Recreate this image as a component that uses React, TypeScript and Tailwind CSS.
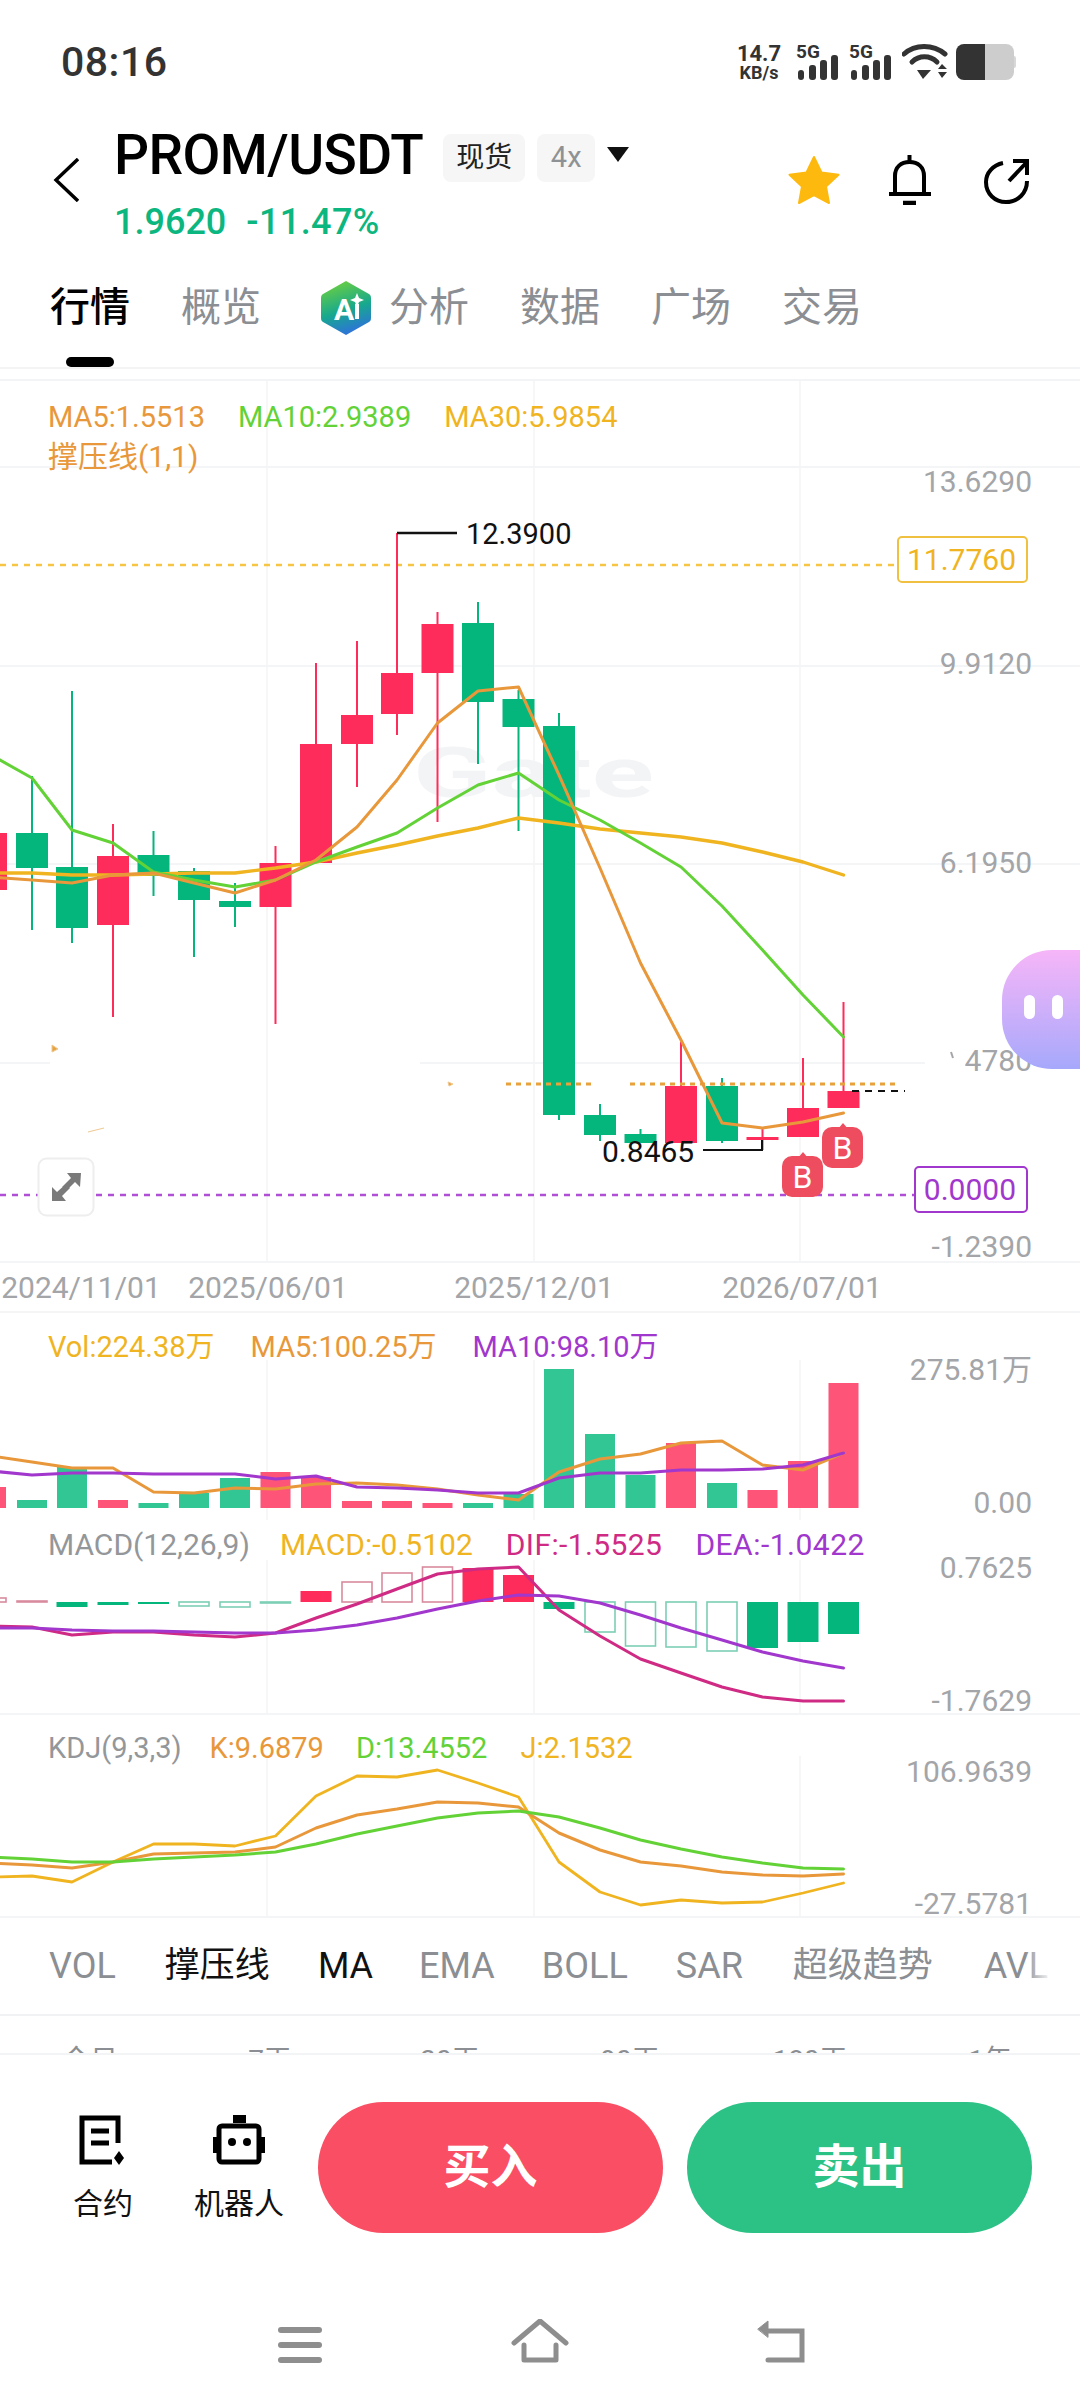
import React from "react";

const XS = [-9, 32, 72, 113, 153.5, 194, 235, 275.5, 316, 357, 397, 437.5, 478, 518.5, 559, 600, 640.5, 681, 722, 762.5, 803, 843.5];
const RED = "#fd2c5b";
const GREEN = "#04b67c";
const GOLD = "#efb41f";
const ORANGE = "#e8983a";
const LIME = "#63d237";
const PURPLE = "#a137cc";
const PINK = "#cf2a84";
const AXIS = "#a3a5a8";
const GRID = "#f4f5f6";

const pts = (ys: number[]) => ys.map((y, i) => `${XS[i]},${y}`).join(" ");

function Line({ ys, color, w = 2.6 }: { ys: number[]; color: string; w?: number }) {
  return <polyline points={pts(ys)} fill="none" stroke={color} strokeWidth={w} strokeLinejoin="round" strokeLinecap="round" />;
}

function Axis({ y, children, color = AXIS }: { y: number; children: React.ReactNode; color?: string }) {
  return (
    <text x={1032} y={y + 10} textAnchor="end" fontSize={30} fill={color}>
      {children}
    </text>
  );
}

function VGrid({ y1, y2 }: { y1: number; y2: number }) {
  return (
    <>
      {[267, 534, 800].map((x) => (
        <line key={x} x1={x} x2={x} y1={y1} y2={y2} stroke={GRID} strokeWidth={1.5} />
      ))}
    </>
  );
}

// color, bodyTop, bodyBottom, wickTop, wickBottom
const CANDLES: [string, number, number, number, number][] = [
  [RED, 833, 890, 833, 890],
  [GREEN, 833, 868, 776, 930],
  [GREEN, 867, 928, 691, 943],
  [RED, 856, 925, 824, 1017],
  [GREEN, 855, 876, 831, 896],
  [GREEN, 871, 900, 868, 957],
  [GREEN, 901, 907, 883, 927],
  [RED, 863, 907, 846, 1024],
  [RED, 744, 863, 663, 863],
  [RED, 715, 744, 641, 787],
  [RED, 673, 714, 533, 735],
  [RED, 624, 673, 612, 822],
  [GREEN, 623, 702, 602, 764],
  [GREEN, 699, 727, 690, 831],
  [GREEN, 726, 1115, 713, 1120],
  [GREEN, 1115, 1135, 1104, 1141],
  [GREEN, 1134, 1143, 1129, 1143],
  [RED, 1086, 1143, 1042, 1143],
  [GREEN, 1086, 1141, 1078, 1143],
  [RED, 1137, 1140, 1128, 1150],
  [RED, 1108, 1137, 1058, 1137],
  [RED, 1091, 1108, 1002, 1108],
];

const MA5 = [877, 880, 883, 875, 873, 883, 893, 880, 860, 827, 780, 723, 691, 687, 775, 868, 963, 1040, 1123, 1128, 1122, 1113];
const MA10 = [755, 778, 830, 843, 872, 880, 887, 880, 862, 847, 833, 808, 785, 773, 800, 820, 843, 867, 906, 950, 995, 1037];
const MA30 = [873, 873, 875, 875, 874, 873, 873, 868, 862, 853, 845, 836, 828, 818, 823, 829, 833, 837, 843, 852, 862, 875];

const VOL: [string, number][] = [
  ["r", 1487], ["g", 1500], ["g", 1467], ["r", 1500], ["g", 1503], ["g", 1493], ["g", 1478], ["r", 1472], ["r", 1477], ["r", 1501], ["r", 1501],
  ["r", 1503], ["g", 1503], ["g", 1494], ["g", 1369], ["g", 1434], ["g", 1475], ["r", 1443], ["g", 1483], ["r", 1490], ["r", 1461], ["r", 1383],
];
const VMA5 = [1456, 1462, 1468, 1468, 1492, 1493, 1488, 1489, 1484, 1483, 1485, 1489, 1495, 1500, 1472, 1459, 1454, 1443, 1441, 1465, 1470, 1453];
const VMA10 = [1471, 1475, 1473, 1473, 1474, 1474, 1474, 1479, 1476, 1487, 1488, 1490, 1493, 1493, 1478, 1473, 1473, 1470, 1470, 1469, 1465, 1453];

// color, filled, end-y relative to the zero line at 1602
const MACD: [string, boolean, number][] = [
  [RED, false, 1598], [RED, false, 1601], [GREEN, true, 1607], [GREEN, true, 1605], [GREEN, true, 1604], [GREEN, false, 1606], [GREEN, false, 1607],
  [GREEN, false, 1603], [RED, true, 1591], [RED, false, 1582], [RED, false, 1573], [RED, false, 1567], [RED, true, 1568], [RED, true, 1575],
  [GREEN, true, 1609], [GREEN, false, 1632], [GREEN, false, 1646], [GREEN, false, 1647], [GREEN, false, 1651], [GREEN, true, 1648], [GREEN, true, 1642], [GREEN, true, 1634],
];
const DIF = [1626, 1627, 1635, 1632, 1632, 1635, 1637, 1633, 1618, 1604, 1589, 1574, 1569, 1567, 1610, 1636, 1659, 1673, 1687, 1697, 1701, 1701];
const DEA = [1628, 1628, 1630, 1631, 1631, 1632, 1633, 1633, 1630, 1625, 1618, 1609, 1601, 1595, 1596, 1603, 1615, 1628, 1640, 1652, 1661, 1668];

const K = [1863, 1865, 1868, 1862, 1854, 1853, 1852, 1847, 1828, 1815, 1809, 1802, 1803, 1807, 1833, 1850, 1862, 1866, 1872, 1875, 1876, 1874];
const D = [1857, 1859, 1862, 1862, 1859, 1857, 1855, 1852, 1844, 1834, 1826, 1818, 1813, 1811, 1817, 1828, 1840, 1849, 1857, 1863, 1868, 1869];
const J = [1877, 1876, 1882, 1862, 1844, 1844, 1846, 1836, 1796, 1776, 1777, 1770, 1783, 1797, 1862, 1892, 1905, 1900, 1903, 1902, 1893, 1883];

function Panel({ top, h, children, legend }: { top: number; h: number; children: React.ReactNode; legend: React.ReactNode }) {
  return (
    <div className="relative w-full" style={{ height: h }}>
      <svg className="absolute inset-0 overflow-visible" width={1080} height={h} viewBox={`0 ${top} 1080 ${h}`}>
        {children}
      </svg>
      {legend}
    </div>
  );
}

function Signal({ x }: { x: number }) {
  return (
    <g fill="#333">
      <rect x={x} y={70} width={6} height={10} rx={3} />
      <rect x={x + 11} y={65} width={7} height={15} rx={3} />
      <rect x={x + 22} y={60} width={7} height={20} rx={3} />
      <rect x={x + 33} y={55} width={7} height={25} rx={3} />
    </g>
  );
}

function NetSignal({ className }: { className: string }) {
  return (
    <div className={`relative h-[36px] w-[42px] ${className}`}>
      <svg className="absolute inset-0" width={42} height={36} viewBox="800 44 42 36"><Signal x={800} /></svg>
      <span className="absolute left-[-2px] top-[-3px] text-[19px] font-bold leading-[21px]">5G</span>
    </div>
  );
}

function StatusRight() {
  return (
    <div className="ml-auto mt-[2px] flex items-center text-[#333]">
      <div className="flex w-[46px] flex-col items-center font-bold">
        <span className="text-[22px] leading-[21px]">14.7</span>
        <span className="text-[18px] leading-[18px]">KB/s</span>
      </div>
      <NetSignal className="ml-[16px]" />
      <NetSignal className="ml-[11px]" />
      <svg className="ml-[9px]" width={46} height={38} viewBox="0 0 46 38" fill="none">
        <path d="M2 11C13 1 31 1 43 11" stroke="#333" strokeWidth={5} strokeLinecap="round" />
        <path d="M10 19C17 12 28 12 35 19" stroke="#333" strokeWidth={5} strokeLinecap="round" />
        <path d="M15 27L21 36L29 27Z" fill="#333" />
        <path d="M36 26L40 21L45 26Z M36 29H45L40 35Z" fill="#333" />
      </svg>
      <div className="ml-[8px] flex h-[36px] w-[60px] items-center">
        <div className="h-full w-[29px] rounded-l-[8px] bg-[#333]" />
        <div className="h-full w-[29px] rounded-r-[8px] bg-[#cdcdcd]" />
        <div className="h-[12px] w-[2px] rounded-r-full bg-[#d8d8d8]" />
      </div>
    </div>
  );
}

function Star() {
  return (
    <svg width={52} height={50} viewBox="0 0 52 50">
      <path d="M26 2L33.5 17.5L50.5 19.8L38 31.5L41 48L26 40L11 48L14 31.5L1.5 19.8L18.5 17.5Z" fill="#fdb90e" stroke="#fdb90e" strokeWidth={2} strokeLinejoin="round" />
    </svg>
  );
}

function Bell() {
  return (
    <svg width={44} height={50} viewBox="0 0 44 50" fill="none" stroke="#000" strokeWidth={4}>
      <path d="M21.5 0V6" />
      <path d="M7 38V21C7 12 13 7 21.5 7C30 7 36 12 36 21V38" />
      <path d="M1 39H43" />
      <path d="M15 48H28" strokeWidth={4.5} />
    </svg>
  );
}

function Share() {
  return (
    <svg width={46} height={48} viewBox="0 0 46 48" fill="none" stroke="#000" strokeWidth={4}>
      <path d="M19 6C9 8 2 16 2 25C2 37 11 45 22 45C34 45 43 36 43 24" />
      <path d="M25 24L42 6" />
      <path d="M29 4H43V18" />
    </svg>
  );
}

function AiIcon() {
  return (
    <svg width={52} height={56} viewBox="0 0 52 56">
      <defs>
        <linearGradient id="aig" x1="0.3" y1="0" x2="0.6" y2="1">
          <stop offset="0" stopColor="#6bcf3f" />
          <stop offset="0.55" stopColor="#17a88e" />
          <stop offset="1" stopColor="#2f6fe0" />
        </linearGradient>
      </defs>
      <path d="M26 1L49 14C51 15 51 17 51 19V37C51 39 51 41 49 42L26 55L3 42C1 41 1 39 1 37V19C1 17 1 15 3 14Z" fill="url(#aig)" />
      <text x={24} y={40} textAnchor="middle" fontSize={30} fontWeight={700} fill="#fff">A</text>
      <rect x={35} y={24} width={4} height={15} fill="#fff" />
      <path d="M37 13L39 18L44 20L39 22L37 27L35 22L30 20L35 18Z" fill="#fff" />
    </svg>
  );
}

function ContractIcon() {
  return (
    <svg width={48} height={50} viewBox="0 0 48 50" fill="none" stroke="#000">
      <path d="M39 28V3H3V47H33" strokeWidth={5} />
      <path d="M12 16H30M12 28H30" strokeWidth={5} />
      <path d="M40 36L45 43L40 50L35 43Z" fill="#000" stroke="none" />
    </svg>
  );
}

function RobotIcon() {
  return (
    <svg width={52} height={50} viewBox="0 0 52 50" fill="none">
      <rect x={20} y={0} width={13} height={8} fill="#000" />
      <rect x={6} y={11} width={40} height={36} rx={3} stroke="#000" strokeWidth={5} />
      <rect x={0} y={22} width={6} height={16} fill="#000" />
      <rect x={46} y={22} width={6} height={16} fill="#000" />
      <circle cx={19} cy={27} r={4} fill="#000" />
      <circle cx={34} cy={27} r={4} fill="#000" />
    </svg>
  );
}

function BMark({ x, y }: { x: number; y: number }) {
  return (
    <g>
      <path d={`M${x + 21} ${y - 4}L${x + 26} ${y + 2}H${x + 16}Z`} fill="#ee4d5f" />
      <rect x={x} y={y} width={41} height={41} rx={10} fill="#ee4d5f" />
      <text x={x + 20.5} y={y + 32} textAnchor="middle" fontSize={32} fill="#fff">B</text>
    </g>
  );
}

export default function App() {
  return (
    <div className="flex h-[2408px] w-[1080px] flex-col overflow-hidden bg-white font-[Roboto,'Noto_Sans_CJK_SC',sans-serif]">
      {/* status */}
      <div className="flex h-[122px] shrink-0 items-center pl-[61px] pr-[64px]">
        <span className="mt-[3px] text-[41px] font-medium tracking-[0.5px] text-[#333]">08:16</span>
        <StatusRight />
      </div>

      {/* header */}
      <div className="flex h-[138px] shrink-0 items-start">
        <svg className="ml-[53px] mt-[36px]" width={26} height={44} viewBox="0 0 26 44" fill="none" stroke="#000" strokeWidth={3.4}>
          <path d="M25 1L3 22L25 43" />
        </svg>
        <div className="ml-[35px] mt-[3px] flex flex-col">
          <div className="flex h-[60px] items-start">
            <span className="text-[55px] font-medium leading-[60px] tracking-[-0.6px] text-black">PROM/USDT</span>
            <span className="ml-[20px] mt-[9px] flex h-[48px] w-[82px] items-center justify-center rounded-[8px] bg-[#f6f6f6] text-[28px] text-[#222]">现货</span>
            <span className="ml-[12px] mt-[9px] flex h-[48px] w-[58px] items-center justify-center rounded-[8px] bg-[#f6f6f6] text-[29px] text-[#8f9295]">4x</span>
            <svg className="ml-[12px] mt-[22px]" width={22} height={15} viewBox="0 0 22 15"><path d="M0 0H22L11 15Z" fill="#111" /></svg>
          </div>
          <div className="mt-[17px] flex h-[40px] items-center text-[36px] font-medium leading-[40px] text-[#0cb67f]">
            <span>1.9620</span>
            <span className="ml-[20px] tracking-[0.4px]">-11.47%</span>
          </div>
        </div>
        <div className="ml-auto mr-[50px] mt-[33px] flex items-start">
          <Star />
          <div className="ml-[48px]"><Bell /></div>
          <div className="ml-[52px] mt-[2px]"><Share /></div>
        </div>
      </div>

      {/* tabs */}
      <div className="flex h-[97px] shrink-0 items-center gap-[51px] pb-[2px] pl-[50px] text-[40px] leading-[48px] text-[#8b8e92]">
        <span className="font-medium text-black">行情</span>
        <span>概览</span>
        <span className="ml-[8px] flex items-center gap-[17px]"><AiIcon /><span>分析</span></span>
        <span>数据</span>
        <span>广场</span>
        <span>交易</span>
      </div>
      <div className="ml-[66px] h-[10px] w-[48px] shrink-0 rounded-full bg-black" />
      <div className="h-[14px] shrink-0 border-y-2 border-[#f3f4f5]" />

      {/* main chart */}
      <Panel
        top={381}
        h={931}
        legend={
          <div className="relative pl-[48px] pt-[18px] text-[29px] leading-[36px]">
            <div className="flex gap-[33px]">
              <span className="text-[#e8983a]">MA5:1.5513</span>
              <span className="text-[#63d237]">MA10:2.9389</span>
              <span className="text-[#efb41f]">MA30:5.9854</span>
            </div>
            <div className="mt-[4px] text-[30px] text-[#e8983a]">撑压线(1,1)</div>
          </div>
        }
      >
        {[467, 666, 864, 1262].map((y) => (
          <line key={y} x1={0} x2={1080} y1={y} y2={y} stroke={GRID} strokeWidth={2} />
        ))}
        <line x1={0} x2={50} y1={1063} y2={1063} stroke={GRID} strokeWidth={2} />
        <line x1={420} x2={930} y1={1063} y2={1063} stroke={GRID} strokeWidth={2} />
        <VGrid y1={381} y2={1262} />
        <text x={413} y={797} fontSize={70} fontWeight={700} fill="#f3f4f6" textLength={241} lengthAdjust="spacingAndGlyphs">Gate</text>

        <line x1={0} x2={897} y1={565} y2={565} stroke="#f6c544" strokeWidth={2.5} strokeDasharray="6 6" />
        <line x1={0} x2={915} y1={1195} y2={1195} stroke="#b04fd6" strokeWidth={2.5} strokeDasharray="6 6" />

        {CANDLES.map(([c, t, b, wt, wb], i) => (
          <g key={i} fill={c}>
            <rect x={XS[i] - 1} y={wt} width={2} height={wb - wt} />
            <rect x={XS[i] - 16} y={t} width={32} height={b - t} />
          </g>
        ))}

        <line x1={506} x2={595} y1={1084} y2={1084} stroke="#e8a23c" strokeWidth={3} strokeDasharray="5 5" />
        <line x1={630} x2={897} y1={1084} y2={1084} stroke="#e8a23c" strokeWidth={3} strokeDasharray="5 5" />
        <line x1={852} x2={905} y1={1091} y2={1091} stroke="#111" strokeWidth={2} strokeDasharray="7 6" />
        <path d="M52 1045L58 1049L52 1052Z M448 1082L453 1084L449 1086Z M88 1132L104 1128" fill="#e8a23c" stroke="#f0c890" strokeWidth={1} />

        <Line ys={MA30} color={GOLD} w={3.4} />
        <Line ys={MA10} color={LIME} w={3} />
        <Line ys={MA5} color={ORANGE} w={3} />

        <path d="M397 533H457" stroke="#111" strokeWidth={2.4} fill="none" />
        <text x={466} y={544} fontSize={29} fill="#111">12.3900</text>
        <path d="M703 1150H762V1140" stroke="#111" strokeWidth={2} fill="none" />
        <text x={602} y={1162} fontSize={30} fill="#111">0.8465</text>

        <BMark x={782} y={1156} />
        <BMark x={822} y={1127} />

        <rect x={38.5} y={1158.5} width={55} height={57} rx={8} fill="#fff" stroke="#eeeeee" strokeWidth={2} />
        <path d="M81 1173H67L71 1178L62 1187L66 1191L75 1182L80 1187Z M52 1201H66L62 1196L70 1188L66 1184L57 1192L52 1187Z" fill="#7a7a7a" />

        <Axis y={482}>13.6290</Axis>
        <Axis y={664}>9.9120</Axis>
        <Axis y={863}>6.1950</Axis>
        <Axis y={1061}>2.4780</Axis>
        <rect x={925} y={1030} width={40} height={60} fill="#fff" />
        <path d="M951 1052L953 1058" stroke={AXIS} strokeWidth={2} />
        <Axis y={1247}>-1.2390</Axis>

        <rect x={898} y={537} width={129} height={45} rx={4} fill="#fff" stroke="#f0c040" strokeWidth={2} />
        <text x={1016} y={570} textAnchor="end" fontSize={30} fill={GOLD}>11.7760</text>
        <rect x={915} y={1167} width={112} height={45} rx={4} fill="#fff" stroke={PURPLE} strokeWidth={2} />
        <text x={1016} y={1200} textAnchor="end" fontSize={30} fill={PURPLE}>0.0000</text>

        <g fontSize={30} fill={AXIS} textAnchor="middle">
          <text x={81} y={1298}>2024/11/01</text>
          <text x={268} y={1298}>2025/06/01</text>
          <text x={534} y={1298}>2025/12/01</text>
          <text x={802} y={1298}>2026/07/01</text>
        </g>
        <line x1={0} x2={1080} y1={1312} y2={1312} stroke={GRID} strokeWidth={2} />
      </Panel>

      {/* volume */}
      <Panel
        top={1312}
        h={208}
        legend={
          <div className="relative flex gap-[36px] pl-[48px] pt-[17px] text-[29px] leading-[36px]">
            <span className="text-[#efb41f]">Vol:224.38万</span>
            <span className="text-[#e8983a]">MA5:100.25万</span>
            <span className="text-[#a137cc]">MA10:98.10万</span>
          </div>
        }
      >
        <VGrid y1={1360} y2={1520} />
        {VOL.map(([c, t], i) => (
          <rect key={i} x={XS[i] - 15} y={t} width={30} height={1508 - t} fill={c === "r" ? "#fd5478" : "#33c695"} />
        ))}
        <Line ys={VMA5} color={ORANGE} w={3} />
        <Line ys={VMA10} color={PURPLE} w={3} />
        <Axis y={1370}>275.81万</Axis>
        <Axis y={1503}>0.00</Axis>
      </Panel>

      {/* macd */}
      <Panel
        top={1520}
        h={194}
        legend={
          <div className="relative flex pl-[48px] pt-[7px] text-[30px] leading-[36px]">
            <span className="text-[#94979a]">MACD(12,26,9)</span>
            <span className="ml-[30px] text-[#efb41f]">MACD:-0.5102</span>
            <span className="ml-[33px] tracking-[0.4px] text-[#cf2a84]">DIF:-1.5525</span>
            <span className="ml-[33px] tracking-[0.5px] text-[#a137cc]">DEA:-1.0422</span>
          </div>
        }
      >
        <VGrid y1={1560} y2={1714} />
        {MACD.map(([c, f, e], i) => {
          const top = Math.min(e, 1602);
          const h = Math.max(Math.abs(e - 1602), 1);
          return f ? (
            <rect key={i} x={XS[i] - 15.5} y={top} width={31} height={h} fill={c} />
          ) : (
            <rect key={i} x={XS[i] - 15} y={top} width={30} height={h} fill="#fff" stroke={c === RED ? "#d98a9e" : "#7ccfb4"} strokeWidth={1.6} />
          );
        })}
        <Line ys={DIF} color={PINK} w={3} />
        <Line ys={DEA} color={PURPLE} w={3} />
        <Axis y={1568}>0.7625</Axis>
        <Axis y={1701}>-1.7629</Axis>
        <line x1={0} x2={1080} y1={1714} y2={1714} stroke={GRID} strokeWidth={2} />
      </Panel>

      {/* kdj */}
      <Panel
        top={1714}
        h={204}
        legend={
          <div className="relative flex pl-[48px] pt-[16px] text-[29px] leading-[36px]">
            <span className="text-[#94979a]">KDJ(9,3,3)</span>
            <span className="ml-[28px] text-[#e8983a]">K:9.6879</span>
            <span className="ml-[32px] text-[#63d237]">D:13.4552</span>
            <span className="ml-[33px] text-[#efb41f]">J:2.1532</span>
          </div>
        }
      >
        <VGrid y1={1756} y2={1918} />
        <Line ys={J} color={GOLD} w={2.8} />
        <Line ys={K} color={ORANGE} w={3} />
        <Line ys={D} color={LIME} w={3} />
        <Axis y={1772}>106.9639</Axis>
        <Axis y={1904}>-27.5781</Axis>
        <line x1={0} x2={1080} y1={1917} y2={1917} stroke={GRID} strokeWidth={2} />
      </Panel>

      {/* indicator tabs */}
      <div className="relative flex h-[98px] shrink-0 items-center overflow-hidden whitespace-nowrap border-b-2 border-[#f1f2f3] pl-[49px] text-[36px] text-[#8b8e92]">
        <span>VOL</span>
        <span className="ml-[49px] text-[35px] text-[#111]">撑压线</span>
        <span className="ml-[48px] text-[#111]">MA</span>
        <span className="ml-[46px]">EMA</span>
        <span className="ml-[47px]">BOLL</span>
        <span className="ml-[48px]">SAR</span>
        <span className="ml-[50px] text-[35px]">超级趋势</span>
        <span className="ml-[51px]">AVL</span>
        <div className="absolute bottom-0 right-0 top-0 w-[55px] bg-gradient-to-r from-transparent to-white to-50%" />
      </div>

      {/* ranges, cut off by the bottom bar */}
      <div className="grid h-[37px] shrink-0 grid-cols-6 overflow-hidden pt-[27px] text-center text-[28px] leading-[36px] text-[#8b8e92]">
        <span>今日</span>
        <span>7天</span>
        <span>30天</span>
        <span>90天</span>
        <span>180天</span>
        <span>1年</span>
      </div>

      {/* action bar */}
      <div className="flex-1 border-t-2 border-[#f3f4f5] bg-white">
        <div className="mt-[47px] flex h-[131px] items-start pl-[46px]">
          <div className="flex w-[114px] flex-col items-center pt-[13px]">
            <ContractIcon />
            <span className="mt-[21px] text-[30px] leading-[36px] text-[#111]">合约</span>
          </div>
          <div className="flex w-[158px] flex-col items-center pt-[13px]">
            <RobotIcon />
            <span className="mt-[21px] text-[30px] leading-[36px] text-[#111]">机器人</span>
          </div>
          <div className="flex h-[131px] w-[345px] items-center justify-center rounded-full bg-[#f94e63] text-[47px] font-bold text-white">买入</div>
          <div className="ml-[24px] flex h-[131px] w-[345px] items-center justify-center rounded-full bg-[#2cc286] text-[47px] font-bold text-white">卖出</div>
        </div>

        <div className="mt-[86px] flex items-end pl-[278px]">
          <svg width={44} height={36} viewBox="0 0 44 36" fill="#8e8e8e">
            <rect y={0} width={44} height={6} rx={3} />
            <rect y={15} width={44} height={6} rx={3} />
            <rect y={30} width={44} height={6} rx={3} />
          </svg>
          <svg className="ml-[189px]" width={58} height={44} viewBox="0 0 58 44" fill="none" stroke="#8e8e8e" strokeWidth={5} strokeLinecap="round" strokeLinejoin="round">
            <path d="M3 24L29 2L55 24" />
            <path d="M13 26V41H45V26" />
          </svg>
          <svg className="ml-[188px]" width={48} height={44} viewBox="0 0 48 44" fill="none" stroke="#8e8e8e" strokeWidth={5} strokeLinecap="round">
            <path d="M10 12H45V41H11" />
            <path d="M1 10L11 2V18Z" fill="#8e8e8e" strokeWidth={1} />
          </svg>
        </div>
      </div>

      {/* floating assistant */}
      <div className="absolute right-[0px] top-[950px] h-[119px] w-[78px] rounded-l-[50px] bg-gradient-to-b from-[#f6b5f8] to-[#a6a8fb]">
        <div className="absolute left-[22px] top-[45px] h-[24px] w-[11px] rounded-full bg-white" />
        <div className="absolute left-[50px] top-[45px] h-[24px] w-[11px] rounded-full bg-white" />
      </div>
    </div>
  );
}
